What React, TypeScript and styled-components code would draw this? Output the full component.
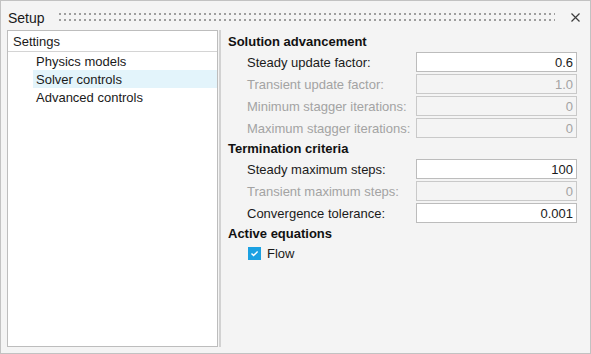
import React from "react";
import styled, { createGlobalStyle } from "styled-components";

const Global = createGlobalStyle`
  html, body { margin: 0; padding: 0; background: #ffffff; }
  body { font-family: "Liberation Sans", Arial, sans-serif; font-size: 13px; color: #1a1a1a; }
  * { box-sizing: border-box; }
`;

const Window = styled.div`
  width: 591px;
  height: 354px;
  border: 1px solid #c2c2c2;
  background: #f4f4f4;
  display: flex;
  flex-direction: column;
`;

const TitleBar = styled.div`
  height: 29px;
  display: flex;
  align-items: center;
  padding: 0 10px 0 7px;
  gap: 14px;
`;

const Title = styled.div`
  font-size: 14px;
  color: #1a1a1a;
  line-height: 16px;
  padding-top: 4px;
`;

const Grip = styled.div`
  flex: 1;
  height: 12px;
  margin: 2px 2px 0 0;
  background-image: linear-gradient(to right, #a6a6a6 1px, transparent 1px),
    linear-gradient(to bottom, transparent 0, transparent 1px);
  background-image: radial-gradient(circle at 1px 1px, #9e9e9e 0.95px, transparent 1.15px);
  background-size: 5px 6px;
  background-position: 0 2px;
`;

const Close = styled.div`
  width: 9px;
  height: 9px;
  display: flex;
  margin-top: 4px;
`;

const Body = styled.div`
  flex: 1;
  display: flex;
  padding: 0 0 6px 6px;
`;

const Tree = styled.div`
  width: 211px;
  border: 1px solid #bdbdbd;
  background: #ffffff;
  display: flex;
  flex-direction: column;
`;

const TreeHeader = styled.div`
  height: 21px;
  border-bottom: 1px solid #d4d4d4;
  padding-left: 5px;
  display: flex;
  align-items: center;
`;

const TreeItem = styled.div<{ $selected?: boolean }>`
  height: 18px;
  margin-left: 25px;
  padding-left: 3px;
  display: flex;
  align-items: center;
  background: ${(p) => (p.$selected ? "#e3f4fb" : "transparent")};
`;

const TreeList = styled.div`
  display: flex;
  flex-direction: column;
`;

const Splitter = styled.div`
  width: 4px;
  margin: 0 0 0 1px;
  border-left: 2px solid #d2d2d2;
`;

const Form = styled.div`
  flex: 1;
  padding: 2px 13px 0 5px;
  display: flex;
  flex-direction: column;
`;

const Heading = styled.div`
  height: 19px;
  font-weight: bold;
  display: flex;
  align-items: center;
  color: #111;
`;

const Row = styled.div`
  height: 22px;
  display: flex;
  align-items: center;
  padding-left: 19px;
`;

const Label = styled.div<{ $disabled?: boolean }>`
  width: 169px;
  color: ${(p) => (p.$disabled ? "#a3a3a3" : "#1a1a1a")};
  white-space: nowrap;
`;

const Field = styled.div<{ $disabled?: boolean }>`
  flex: 1;
  height: 20px;
  border: 1px solid ${(p) => (p.$disabled ? "#c9c9c9" : "#bcbcbc")};
  background: ${(p) => (p.$disabled ? "#f4f4f4" : "#ffffff")};
  color: ${(p) => (p.$disabled ? "#a3a3a3" : "#1a1a1a")};
  display: flex;
  align-items: center;
  justify-content: flex-end;
  padding-right: 3px;
`;

const CheckRow = styled.div`
  height: 20px;
  display: flex;
  align-items: center;
  padding-left: 20px;
  gap: 6px;
`;

const CheckBox = styled.div`
  width: 13px;
  height: 13px;
  background: #1ba1e2;
  display: flex;
  align-items: center;
  justify-content: center;
`;

type F = { label: string; value: string; disabled?: boolean };

const solution: F[] = [
  { label: "Steady update factor:", value: "0.6" },
  { label: "Transient update factor:", value: "1.0", disabled: true },
  { label: "Minimum stagger iterations:", value: "0", disabled: true },
  { label: "Maximum stagger iterations:", value: "0", disabled: true },
];

const termination: F[] = [
  { label: "Steady maximum steps:", value: "100" },
  { label: "Transient maximum steps:", value: "0", disabled: true },
  { label: "Convergence tolerance:", value: "0.001" },
];

const FieldRow = ({ f }: { f: F }) => (
  <Row>
    <Label $disabled={f.disabled}>{f.label}</Label>
    <Field $disabled={f.disabled}>{f.value}</Field>
  </Row>
);

export default function App() {
  return (
    <>
      <Global />
      <Window>
        <TitleBar>
          <Title>Setup</Title>
          <Grip />
          <Close>
            <svg width="9" height="9" viewBox="0 0 9 9">
              <path d="M0.5 0.5 L8.5 8.5 M8.5 0.5 L0.5 8.5" stroke="#3c3c3c" strokeWidth="1.2" />
            </svg>
          </Close>
        </TitleBar>
        <Body>
          <Tree>
            <TreeHeader>Settings</TreeHeader>
            <TreeList>
              <TreeItem>Physics models</TreeItem>
              <TreeItem $selected>Solver controls</TreeItem>
              <TreeItem>Advanced controls</TreeItem>
            </TreeList>
          </Tree>
          <Splitter />
          <Form>
            <Heading>Solution advancement</Heading>
            {solution.map((f) => (
              <FieldRow key={f.label} f={f} />
            ))}
            <Heading>Termination criteria</Heading>
            {termination.map((f) => (
              <FieldRow key={f.label} f={f} />
            ))}
            <Heading>Active equations</Heading>
            <CheckRow>
              <CheckBox>
                <svg width="9" height="9" viewBox="0 0 9 9">
                  <path d="M1.5 4.6 L3.6 6.6 L7.6 2.4" stroke="#ffffff" strokeWidth="1.4" fill="none" />
                </svg>
              </CheckBox>
              Flow
            </CheckRow>
          </Form>
        </Body>
      </Window>
    </>
  );
}
